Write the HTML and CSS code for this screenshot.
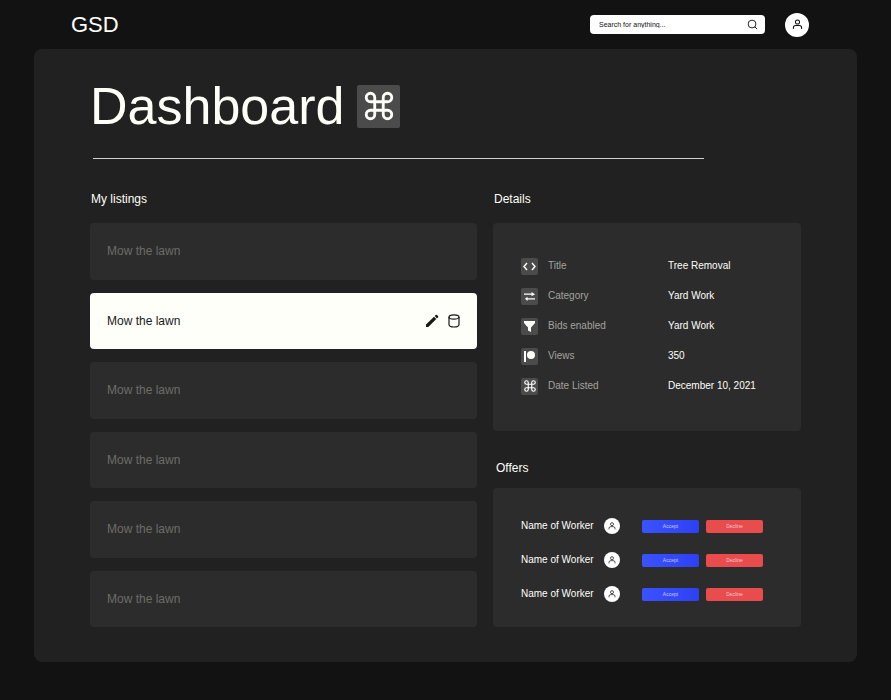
FILE: index.html
```html
<!DOCTYPE html>
<html lang="en">
<head>
<meta charset="utf-8">
<meta name="viewport" content="width=device-width, initial-scale=1">
<title>GSD Dashboard</title>
<link rel="stylesheet" href="styles.css">
</head>
<body>
<svg class="defs" aria-hidden="true">
  <symbol id="command" viewBox="0 0 24 24"><path fill="none" stroke="currentColor" stroke-width="2" d="M18 3a3 3 0 0 0-3 3v12a3 3 0 1 0 3-3H6a3 3 0 1 0 3 3V6a3 3 0 1 0-3 3h12a3 3 0 0 0 0-6z"/></symbol>
  <symbol id="user" viewBox="0 0 24 24"><g fill="none" stroke="currentColor" stroke-width="2.2"><path d="M3 22v-3a5 5 0 0 1 5-5h8a5 5 0 0 1 5 5v3"/><circle cx="12" cy="6.500" r="4.500"/></g></symbol>
</svg>
<header class="topbar">
  <a class="brand" href="#">GSD</a>
  <form class="search" role="search">
    <input class="search-input" type="search" placeholder="Search for anything..." aria-label="Search for anything">
    <button class="search-button" type="submit" aria-label="Search">
      <svg viewBox="0 0 24 24" width="11" height="11" fill="none" stroke="currentColor" stroke-width="2"><circle cx="11" cy="11" r="8.500"/><path d="M17 17l5 5"/></svg>
    </button>
  </form>
  <button class="avatar avatar-large" type="button" aria-label="Account"><svg width="11" height="11"><use href="#user"/></svg></button>
</header>
<main class="panel">
  <div class="title">
    <h1>Dashboard</h1>
    <span class="tile tile-large"><svg width="34" height="34"><use href="#command"/></svg></span>
  </div>
  <hr class="rule">
  <div class="columns">
    <section class="column">
      <h2>My listings</h2>
      <ul class="listings">
        <li class="listing"><a href="#">Mow the lawn</a></li>
        <li class="listing selected">
          <a href="#">Mow the lawn</a>
          <button class="icon-button" type="button" aria-label="Edit"><svg width="14" height="14" viewBox="0 0 14 14" fill="currentColor"><path d="M1 10.500L9 2.800l2.300 2.300L3.300 13H1z"/><path d="M9.700 2.100l1-1a1 1 0 0 1 1.300 0l1 1a1 1 0 0 1 0 1.300l-1 1z"/></svg></button>
          <button class="icon-button" type="button" aria-label="Delete"><svg width="14" height="14" viewBox="0 0 14 14" fill="none" stroke="currentColor" stroke-width="1.200"><ellipse cx="7" cy="3" rx="5" ry="2.200"/><path d="M2 3v7.500c0 1.300 1.500 2.500 5 2.500s5-1.200 5-2.500V3"/></svg></button>
        </li>
        <li class="listing"><a href="#">Mow the lawn</a></li>
        <li class="listing"><a href="#">Mow the lawn</a></li>
        <li class="listing"><a href="#">Mow the lawn</a></li>
        <li class="listing"><a href="#">Mow the lawn</a></li>
      </ul>
    </section>
    <div class="column">
      <section>
        <h2>Details</h2>
        <dl class="card details">
          <div class="detail">
            <dt><span class="tile"><svg width="15" height="15" viewBox="0 0 15 15" fill="none" stroke="currentColor" stroke-width="1.400"><path d="M5 4L2 7.500 5 11M10 4l3 3.500L10 11"/></svg></span>Title</dt>
            <dd>Tree Removal</dd>
          </div>
          <div class="detail">
            <dt><span class="tile"><svg width="15" height="15" viewBox="0 0 15 15" fill="currentColor"><path d="M2 4.500h7.500V3L13 5.200 9.500 7.200V5.700H2zM13 9.200H5.500V7.700L3 9.800l2.500 2.100v-1.500H13z"/></svg></span>Category</dt>
            <dd>Yard Work</dd>
          </div>
          <div class="detail">
            <dt><span class="tile"><svg width="15" height="15" viewBox="0 0 15 15" fill="currentColor"><path d="M2 2h11v2L9 8.500V13l-3-1.500v-3L2 4z"/></svg></span>Bids enabled</dt>
            <dd>Yard Work</dd>
          </div>
          <div class="detail">
            <dt><span class="tile"><svg width="15" height="15" viewBox="0 0 15 15" fill="currentColor"><path d="M2 2h2v11H2z"/><circle cx="9" cy="6" r="4"/></svg></span>Views</dt>
            <dd>350</dd>
          </div>
          <div class="detail">
            <dt><span class="tile"><svg width="14" height="14"><use href="#command"/></svg></span>Date Listed</dt>
            <dd>December 10, 2021</dd>
          </div>
        </dl>
      </section>
      <section>
        <h2 class="offers-heading">Offers</h2>
        <ul class="card offers">
          <li class="offer"><span class="worker">Name of Worker</span><span class="avatar"><svg width="8" height="8"><use href="#user"/></svg></span><button class="action accept" type="button">Accept</button><button class="action decline" type="button">Decline</button></li>
          <li class="offer"><span class="worker">Name of Worker</span><span class="avatar"><svg width="8" height="8"><use href="#user"/></svg></span><button class="action accept" type="button">Accept</button><button class="action decline" type="button">Decline</button></li>
          <li class="offer"><span class="worker">Name of Worker</span><span class="avatar"><svg width="8" height="8"><use href="#user"/></svg></span><button class="action accept" type="button">Accept</button><button class="action decline" type="button">Decline</button></li>
        </ul>
      </section>
    </div>
  </div>
</main>
</body>
</html>
```

FILE: styles.css
```css
* {
  box-sizing: border-box;
}

body {
  margin: 0;
  background: #121212;
  color: #fffffa;
  font-family: "Liberation Sans", Arial, sans-serif;
  font-size: 12px;
  line-height: 16px;
}

h1,
h2,
ul,
dl,
dd {
  margin: 0;
  padding: 0;
  font-weight: 400;
}

ul {
  list-style: none;
}

a {
  color: inherit;
  text-decoration: none;
}

button,
input {
  border: 0;
  padding: 0;
  background: none;
  color: inherit;
  font: inherit;
}

svg {
  display: block;
}

.defs {
  display: none;
}

.topbar {
  display: flex;
  align-items: center;
  height: 49px;
  padding: 0 82px 0 71px;
}

.brand {
  margin-right: auto;
  font-size: 22px;
  line-height: 24px;
}

.search {
  display: flex;
  align-items: center;
  width: 175px;
  height: 19px;
  margin-right: 20px;
  padding: 0 7px 0 9px;
  border-radius: 4px;
  background: #fff;
  color: #121212;
}

.search-input {
  flex: 1;
  min-width: 0;
  outline: 0;
  font-size: 7px;
  line-height: 16px;
}

.search-input::placeholder {
  color: #121212;
}

.avatar {
  display: grid;
  place-items: center;
  width: 16px;
  height: 16px;
  border-radius: 50%;
  background: #fff;
  color: #121212;
}

.avatar-large {
  width: 24px;
  height: 24px;
}

.panel {
  margin: 0 34px 38px;
  padding: 35px 56px;
  border-radius: 8px;
  background: #212121;
}

.title {
  display: flex;
  align-items: center;
  gap: 13px;
}

h1 {
  font-size: 52px;
  line-height: 44px;
}

h2 {
  padding-left: 1px;
  font-size: 12px;
  line-height: 16px;
}

.tile {
  display: grid;
  place-items: center;
  width: 17px;
  height: 17px;
  border-radius: 2px;
  background: #4b4b4b;
  color: #fffffa;
}

.tile-large {
  width: 43px;
  height: 43px;
}

.rule {
  width: 86%;
  height: 1px;
  margin: 30px 0 32px 3px;
  border: 0;
  background: #d0d0cc;
}

.columns {
  display: grid;
  grid-template-columns: 387fr 308fr;
  gap: 16px;
}

.column {
  display: flex;
  flex-direction: column;
}

.listings {
  display: flex;
  flex: 1;
  flex-direction: column;
  gap: 13px;
  margin-top: 16px;
}

.listing {
  display: flex;
  flex: 1;
  align-items: center;
  gap: 8px;
  padding: 0 16px 0 17px;
  border-radius: 4px;
  background: #2c2c2c;
  color: #6c6c6a;
}

.listing a {
  flex: 1;
}

.selected {
  background: #fffffa;
  color: #181818;
}

.card {
  border-radius: 4px;
  background: #2c2c2c;
  font-size: 10px;
}

.details {
  margin-top: 16px;
  padding: 28px 28px 30px;
}

.detail {
  display: grid;
  grid-template-columns: 147px 1fr;
  align-items: center;
  height: 30px;
}

.detail dt {
  display: flex;
  align-items: center;
  gap: 10px;
  color: #a3a39f;
}

.offers-heading {
  margin: 29px 0 12px;
  padding-left: 3px;
}

.offers {
  padding: 21px 28px 16px;
}

.offer {
  display: flex;
  align-items: center;
  height: 34px;
}

.worker {
  flex: 1;
  max-width: 83px;
}

.action {
  width: 57px;
  height: 13px;
  margin-left: 7px;
  border-radius: 2px;
  font-size: 5px;
  line-height: 13px;
  color: #ffffffb3;
}

.accept {
  margin-left: 22px;
  background: linear-gradient(90deg, #3b52ff, #2d41f4);
}

.decline {
  background: #e84c4c;
}
```
